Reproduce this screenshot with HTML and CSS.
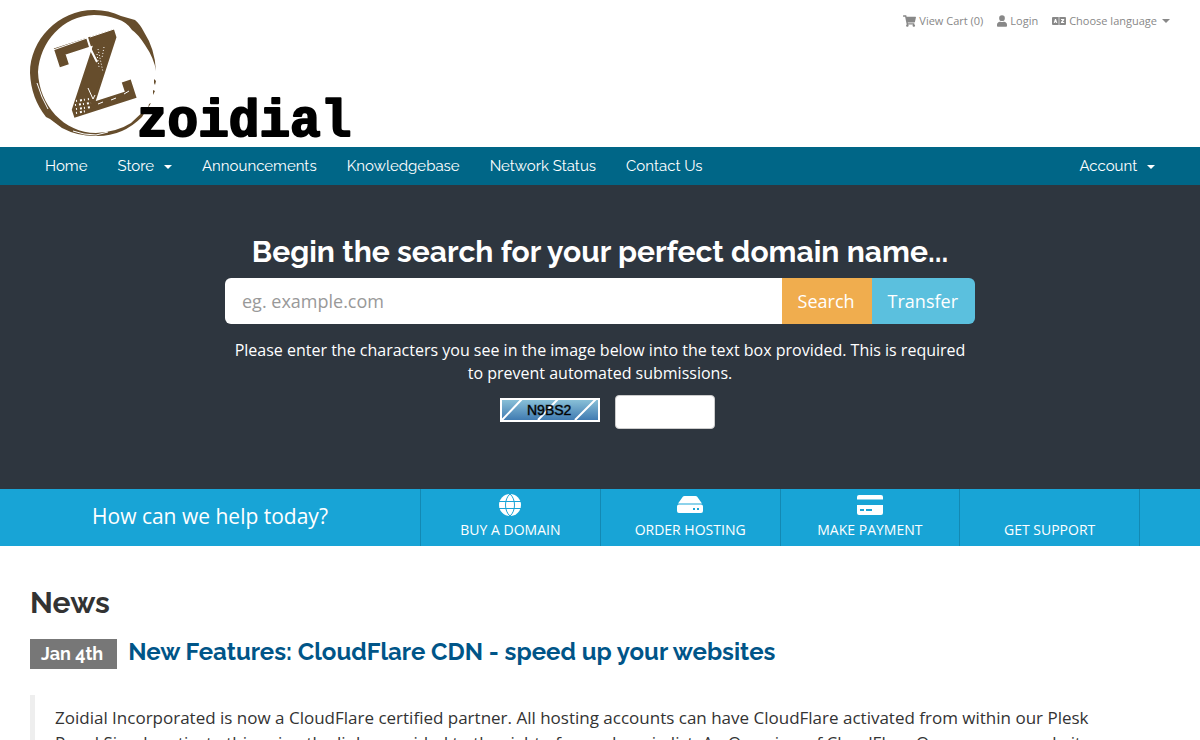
FILE: index.html
```html
<!DOCTYPE html>
<html lang="en">

	<head>
		<meta charset="UTF-8">
		<meta name="viewport" content="width=device-width, initial-scale=1">
		<title>Zoidial</title>
		<link rel="stylesheet" href="styles.css">
	</head>

	<body>
		<header class="header">
			<a class="logo" href="#">
				<svg width="326" height="132" viewBox="28 8 326 132" role="img">
					<!-- stamp ring, thick on the left and worn away on the right -->
					<path fill="#664d2c" fill-rule="evenodd" d="M30 73 C30 40 58 10 94 10 Q109 10 121 16 L128 18 L135 20 Q140 24 144 32 Q155 49 156 71 Q154 58 145 45 Q138 34 132 30 Q127 22 117 19 Q106 15 94 15 C62 16 40 42 38 72 C39 105 64 133 96 133 Q117 132 131 123 L148 107 L142 117 Q122 137 95 136 Q77 136 62 128 L50 119 L46 117 Q31 98 30 73Z" />
					<path fill="#664d2c" d="M154 79 l2 2 l-1 4 l-1 -2z M153 90 l2 1 l-2 4z M149 104 l2 -1 l-3 5z" />
					<text class="logo_z" x="72" y="117" transform="rotate(-18 72 117)">Z</text>
					<g stroke="#fff" fill="none">
						<path d="M53 50 L87 38 M90 37 L114 29" stroke-width="1" />
						<path d="M86 34 L91 50 L97 62" stroke-width="2" />
						<path d="M88 88 L93 99 L95 95" stroke-width="1" />
						<path d="M37 83 L42 97 L48 109 M73 131 L84 134 L96 135 L108 132" stroke-width="1" />
						<path d="M98 49 L103 72 M104 47 L102 58 M97 54 L99 67" stroke-width="1" stroke-dasharray="1 2" />
						<path d="M76 101 L89 99 M75 105 L91 103 M76 109 L91 107 M76 113 L86 111" stroke-width="2" stroke-dasharray="1 3 2 2" />
						<path d="M98 104 l5 -2 m8 -2 l5 -2 m8 -4 l5 -3" stroke-width="1" />
					</g>
					<text class="logo_name" x="137" y="136">zoidial</text>
				</svg>
			</a>
			<ul class="top_nav">
				<li>
					<a href="#">
						<svg width="13" height="12" viewBox="0 0 576 512"><path fill="currentColor" d="M528 301l47-208c4-15-8-29-23-29H159l-9-45C148 8 138 0 126 0H24C11 0 0 11 0 24v16c0 13 11 24 24 24h70l70 343c-17 10-28 28-28 49 0 31 25 56 56 56s56-25 56-56c0-16-6-30-17-40h210c-11 10-17 24-17 40 0 31 25 56 56 56s56-25 56-56c0-22-13-41-32-50l5-25c4-15-8-29-23-29H218l-7-32h293c12 0 21-8 24-19z" /></svg>
						View Cart (0)
					</a>
				</li>
				<li>
					<a href="#">
						<svg width="10" height="12" viewBox="0 0 448 512"><path fill="currentColor" d="M224 256a128 128 0 1 0 0-256 128 128 0 0 0 0 256zm90 32h-17a174 174 0 0 1-146 0h-17C60 288 0 348 0 422v42c0 27 21 48 48 48h352c27 0 48-21 48-48v-42c0-74-60-134-134-134z" /></svg>
						Login
					</a>
				</li>
				<li>
					<a href="#">
						<svg width="14" height="12" viewBox="0 0 14 12"><path fill="currentColor" fill-rule="evenodd" d="M1 2H6.700V10H1Q0 10 0 9V3Q0 2 1 2ZM7.300 2H13Q14 2 14 3V9Q14 10 13 10H7.300ZM3 4L1.700 8H2.700L3 7.300H4L4.300 8H5.300L4 4ZM9 4H12.200V5L10.700 7H12.200V8H9V7L10.500 5H9Z" /></svg>
						Choose language
						<span class="caret"></span>
					</a>
				</li>
			</ul>
		</header>

		<nav class="main_menu">
			<ul class="menu_list">
				<li><a href="#">Home</a></li>
				<li><a href="#">Store <span class="caret"></span></a></li>
				<li><a href="#">Announcements</a></li>
				<li><a href="#">Knowledgebase</a></li>
				<li><a href="#">Network Status</a></li>
				<li><a href="#">Contact Us</a></li>
			</ul>
			<ul class="menu_list">
				<li><a href="#">Account <span class="caret"></span></a></li>
			</ul>
		</nav>

		<section class="banner">
			<form class="domain_form" action="#">
				<h2><label for="domain">Begin the search for your perfect domain name...</label></h2>
				<div class="input_group">
					<input type="text" id="domain" name="domain" placeholder="eg. example.com">
					<button type="submit" class="btn_search">Search</button>
					<button type="submit" class="btn_transfer">Transfer</button>
				</div>
				<p><label for="code">Please enter the characters you see in the image below into the text box provided. This is required to prevent automated submissions.</label></p>
				<div class="captcha">
					<svg width="100" height="24" viewBox="0 0 100 24">
						<defs>
							<linearGradient id="sky" x1="0" y1="0" x2="0" y2="1">
								<stop offset="0" stop-color="#8cc3d9" />
								<stop offset="1" stop-color="#3d78b0" />
							</linearGradient>
						</defs>
						<rect x="1" y="1" width="98" height="22" fill="url(#sky)" stroke="#fff" stroke-width="2" />
						<path d="M2 22 L22 1 M38 22 L58 1 M75 22 L96 1" stroke="#fff" stroke-width="2" />
						<text class="captcha_text" x="27" y="17">N9BS2</text>
					</svg>
					<input type="text" id="code" name="code" maxlength="5">
				</div>
			</form>
		</section>

		<section class="shortcuts">
			<h3>How can we help today?</h3>
			<ul>
				<li>
					<a href="#">
						<svg width="24" height="24" viewBox="0 0 24 24">
							<circle cx="12" cy="12" r="11" fill="#fff" />
							<path d="M1 8.500H23M1 15.500H23M12 1C6 6 6 18 12 23M12 1C18 6 18 18 12 23" fill="none" stroke="#18a4d6" />
						</svg>
						Buy A Domain
					</a>
				</li>
				<li>
					<a href="#">
						<svg width="26" height="24" viewBox="0 0 26 24">
							<path d="M6 3.500Q6.500 3 7.500 3H18.500Q19.500 3 20 3.500L25 10.500H1Z" fill="#fff" />
							<path fill="#fff" fill-rule="evenodd" d="M2 11.500H24Q26 11.500 26 13.500V18Q26 20 24 20H2Q0 20 0 18V13.500Q0 11.500 2 11.500ZM16 15V17H18V15ZM20 15V17H22V15Z" />
						</svg>
						Order Hosting
					</a>
				</li>
				<li>
					<a href="#">
						<svg width="26" height="24" viewBox="0 0 26 24">
							<path fill="#fff" d="M2 2H24Q26 2 26 4V6.500H0V4Q0 2 2 2Z" />
							<path fill="#fff" fill-rule="evenodd" d="M0 12H26V20Q26 22 24 22H2Q0 22 0 20ZM3 16V18H7V16ZM9 16V18H15V16Z" />
						</svg>
						Make Payment
					</a>
				</li>
				<li><a href="#">Get Support</a></li>
			</ul>
		</section>

		<main class="news">
			<h2>News</h2>
			<div class="news_title">
				<span class="date">Jan 4th</span>
				<a href="#">New Features: CloudFlare CDN - speed up your websites</a>
			</div>
			<blockquote>
				<p>Zoidial Incorporated is now a CloudFlare certified partner. All hosting accounts can have CloudFlare activated from within our Plesk Panel.Simply activate this using the links provided to the right of your domain list. An Overview of CloudFlare On average, a website on</p>
			</blockquote>
		</main>
	</body>

</html>
```
FILE: styles.css
```css
* {
	box-sizing: border-box;
}

body {
	margin: 0;
	background-color: #fff;
	color: #333;
	font-family: "Open Sans", sans-serif;
	font-size: 16px;
}

ul {
	list-style-type: none;
	margin: 0;
	padding: 0;
}

a {
	text-decoration: none;
	color: inherit;
}

h2, h3, p {
	margin: 0;
}

input, button {
	font-family: inherit;
	border: 0;
}

.caret {
	display: inline-block;
	border-top: 4px solid;
	border-left: 4px solid transparent;
	border-right: 4px solid transparent;
	vertical-align: middle;
}

/* logo and small links */
.header {
	display: flex;
	justify-content: space-between;
	align-items: flex-start;
	padding: 8px 30px 7px 28px;
}

.logo svg {
	display: block;
}

.logo_z {
	font-family: "DejaVu Serif", serif;
	font-weight: bold;
	font-size: 95px;
	fill: #664d2c;
	stroke: #664d2c;
	stroke-width: 3px;
}

.logo_name {
	font-family: "Liberation Mono", monospace;
	font-weight: bold;
	font-size: 51px;
	fill: #000;
	stroke: #000;
	stroke-width: 2px;
	stroke-linejoin: round;
}

.top_nav {
	display: flex;
	gap: 14px;
	padding-top: 5px;
	color: #888;
	font-size: 11px;
	line-height: 16px;
}

.top_nav a {
	display: flex;
	align-items: center;
	gap: 3px;
}

.top_nav .caret {
	margin-left: 2px;
}

/* menu bar */
.main_menu {
	display: flex;
	justify-content: space-between;
	padding: 0 30px;
	background-color: #006687;
	color: #fff;
	font-family: Raleway, Lato, sans-serif;
	font-size: 15px;
	line-height: 38px;
}

.menu_list {
	display: flex;
}

.menu_list a {
	display: block;
	padding: 0 15px;
}

.menu_list .caret {
	margin-left: 6px;
}

/* domain search */
.banner {
	padding: 50px 20px 60px;
	background-color: #2e363f;
	color: #fff;
	text-align: center;
}

.domain_form {
	max-width: 750px;
	margin: 0 auto;
}

.domain_form h2 {
	font-family: Raleway, Lato, sans-serif;
	font-size: 30px;
	line-height: 33px;
	padding-bottom: 10px;
}

.input_group {
	display: flex;
	height: 46px;
	border-radius: 6px;
	overflow: hidden;
}

.input_group input {
	flex: 1;
	min-width: 0;
	padding: 0 17px;
	font-size: 18px;
}

.input_group input::placeholder {
	color: #999;
}

.input_group button {
	padding: 0 17px 0 16px;
	color: #fff;
	font-size: 18px;
}

.input_group .btn_search {
	background-color: #f0ad4e;
}

.input_group .btn_transfer {
	background-color: #5bc0de;
}

.domain_form p {
	padding: 15px 0 10px;
	line-height: 23px;
}

.captcha {
	display: flex;
	justify-content: center;
	align-items: flex-start;
	gap: 15px;
	padding-left: 15px;
}

.captcha svg {
	margin-top: 3px;
}

.captcha_text {
	font-family: "Liberation Sans", sans-serif;
	font-size: 14px;
	stroke: #000;
	stroke-opacity: 0.4;
}

.captcha input {
	width: 100px;
	height: 34px;
	border: 1px solid #ccc;
	border-radius: 4px;
}

/* quick links */
.shortcuts {
	display: grid;
	grid-template-columns: 35% 60%;
	background-color: #18a4d6;
	color: #fff;
}

.shortcuts h3 {
	font-size: 21px;
	font-weight: normal;
	line-height: 55px;
	text-align: center;
}

.shortcuts ul {
	display: grid;
	grid-template-columns: repeat(4, 1fr);
	border-right: 1px solid #1389b3;
}

.shortcuts li {
	border-left: 1px solid #1389b3;
}

.shortcuts a {
	display: flex;
	flex-direction: column;
	align-items: center;
	justify-content: flex-end;
	height: 57px;
	padding-bottom: 6px;
	gap: 3px;
	font-size: 14px;
	line-height: 20px;
	text-transform: uppercase;
}

/* news */
.news {
	padding: 40px 30px 0;
}

.news h2 {
	font-family: Raleway, Lato, sans-serif;
	font-size: 30px;
	line-height: 33px;
}

.news_title {
	display: flex;
	align-items: flex-start;
	gap: 11px;
	padding: 20px 0 26px;
	font-family: Raleway, Lato, sans-serif;
	font-size: 24px;
	font-weight: bold;
	line-height: 26px;
}

.news_title a {
	color: #058;
}

.date {
	padding: 0 14px 0 11px;
	background-color: #777;
	color: #fff;
	font-size: 18px;
	line-height: 30px;
}

blockquote {
	margin: 0;
	padding: 10px 20px;
	border-left: 5px solid #eee;
	font-size: 17px;
	line-height: 25px;
}
```
